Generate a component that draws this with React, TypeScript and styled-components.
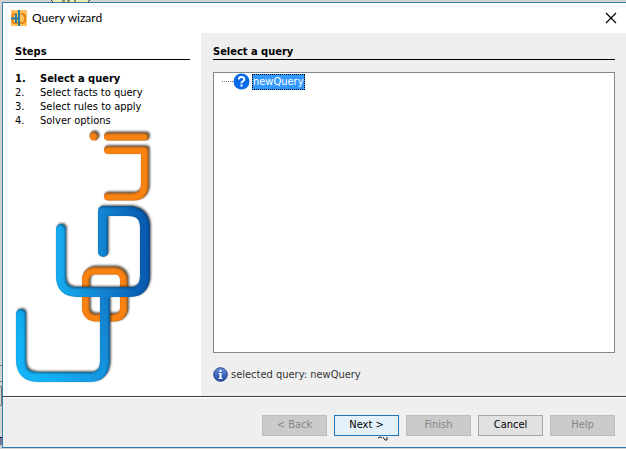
import React from "react";
import styled, { createGlobalStyle, css } from "styled-components";

const GlobalStyle = createGlobalStyle`
  *, *::before, *::after { box-sizing: border-box; }
  body {
    margin: 0;
    overflow: hidden;
    background: #d3d3d3;
    color: #000;
    font: 11px/14px "DejaVu Sans Condensed", "Noto Sans", sans-serif;
  }
`;

const Desktop = styled.div`
  position: relative;
  display: flex;
  min-height: 100vh;
  padding: 2px 0 1px 2px;
  overflow: hidden;
`;

const BackgroundWindow = styled.svg`
  position: absolute;
  top: 0;
  left: 0;
`;

const Dialog = styled.section`
  position: relative;
  flex: 1;
  display: grid;
  grid-template-columns: 198px 1fr;
  grid-template-rows: 30px 1fr 51px;
  border: 1px solid #2f7fae;
  border-right: 0;
  background: #efefef;
`;

const TitleBar = styled.header`
  grid-column: 1 / -1;
  display: flex;
  align-items: center;
  gap: 5px;
  padding: 0 9px 0 8px;
  background: #fff;
`;

const Title = styled.h1`
  flex: 1;
  margin: 0;
  font: 12px/16px Lato, "Open Sans", sans-serif;
`;

const CloseButton = styled.button`
  display: flex;
  padding: 0;
  border: 0;
  background: none;
`;

const pane = css`
  display: flex;
  flex-direction: column;
  padding: 12px 11px 0 12px;
`;

const Sidebar = styled.aside`
  ${pane}
  background: #fff;
`;

const Main = styled.main`
  ${pane}
`;

const Heading = styled.h2`
  margin: 0 0 12px;
  border-bottom: 1px solid #000;
  font-size: 11px;
  line-height: 14px;
  font-weight: bold;
`;

const Steps = styled.ol`
  margin: 0;
  padding: 0;
  list-style: none;
`;

const Step = styled.li<{ $current?: boolean }>`
  display: grid;
  grid-template-columns: 25px 1fr;
  font-weight: ${(p) => (p.$current ? "bold" : "normal")};
`;

const LogoArt = styled.svg`
  display: block;
  flex: none;
`;

const Tree = styled.ul`
  flex: 1;
  margin: 0;
  padding: 0 0 0 8px;
  border: 1px solid #828790;
  background: #fff;
  list-style: none;
`;

const TreeItem = styled.li`
  display: flex;
  align-items: center;
  height: 17px;

  &::before {
    content: "";
    width: 11px;
    border-top: 1px dotted #777;
  }
`;

const NodeLabel = styled.button`
  height: 16px;
  margin-left: 2px;
  padding: 0;
  border: 1px dotted #000;
  background: #3399ff;
  color: #fff;
  font: inherit;
`;

const Status = styled.p`
  display: flex;
  align-items: center;
  gap: 3px;
  height: 43px;
  margin: 0;
  color: #333;
`;

const Footer = styled.footer`
  grid-column: 1 / -1;
  display: flex;
  align-items: center;
  justify-content: flex-end;
  gap: 7px;
  padding: 6px 11px 0 0;
  border-top: 1px solid #404040;
  box-shadow: inset 0 1px #fff;
`;

const WizardButton = styled.button<{ $primary?: boolean }>`
  width: 65px;
  height: 21px;
  padding: 0;
  border: 1px solid ${(p) => (p.$primary ? "#1e74b5" : "#a5a5a5")};
  background: ${(p) => (p.$primary ? "#e3f1fb" : "#e1e1e1")};
  color: #000;
  font: inherit;

  &:disabled {
    border-color: #bcbcbc;
    background: #cbcbcb;
    color: #858585;
  }
`;

const Cursor = styled.svg`
  position: absolute;
  left: 377px;
  top: 436px;
`;

function Logo() {
  return (
    <LogoArt width="152" height="256" viewBox="15 127 152 256" role="img" aria-label="CoGui">
      <defs>
        <linearGradient id="blue" gradientUnits="userSpaceOnUse" x1="16" y1="340" x2="150" y2="255">
          <stop offset="0" stopColor="#12b4f7" />
          <stop offset="0.5" stopColor="#1587d4" />
          <stop offset="1" stopColor="#0b5cb0" />
        </linearGradient>
        <linearGradient id="blueUpper" gradientUnits="userSpaceOnUse" x1="56" y1="0" x2="150" y2="0">
          <stop offset="0" stopColor="#15adf0" />
          <stop offset="0.5" stopColor="#1283d2" />
          <stop offset="1" stopColor="#0756ad" />
        </linearGradient>
        <filter id="bevel" filterUnits="userSpaceOnUse" x="12" y="120" width="150" height="270" colorInterpolationFilters="sRGB">
          <feOffset in="SourceAlpha" dx="-1" dy="1" result="moved" />
          <feGaussianBlur in="moved" stdDeviation="1" result="soft" />
          <feComposite in="SourceAlpha" in2="soft" operator="out" result="edge" />
          <feFlood floodColor="#103050" floodOpacity="0.6" />
          <feComposite in2="edge" operator="in" result="shade" />
          <feMerge result="body">
            <feMergeNode in="SourceGraphic" />
            <feMergeNode in="shade" />
          </feMerge>
          <feDropShadow in="body" dx="1" dy="-1" stdDeviation="1" floodColor="#222" floodOpacity="0.75" />
        </filter>
      </defs>
      <g fill="none" strokeLinecap="round" strokeLinejoin="round">
        <g stroke="#fa8210" strokeWidth="8" filter="url(#bevel)">
          <circle cx="94" cy="135" r="4.5" fill="#fa8210" stroke="none" />
          <path d="M108 135.500H145" />
          <path d="M108 149H145V183Q145 195.500 133 195.500H108" />
          <rect x="86" y="269.500" width="38" height="47" rx="9" />
        </g>
        <g strokeWidth="10" filter="url(#bevel)">
          <path stroke="url(#blue)" d="M21 313V359Q21 376 38 376H90Q105 376 105 359V291" />
          <path stroke="url(#blueUpper)" d="M103 251V210H128Q145 210 145 227V274Q145 291 130 291H77Q61 291 61 275V228" />
        </g>
      </g>
    </LogoArt>
  );
}

const steps = ["Select a query", "Select facts to query", "Select rules to apply", "Solver options"];

export default function App() {
  return (
    <>
      <GlobalStyle />
      <Desktop>
        <BackgroundWindow width="100" height="449" aria-hidden="true">
          <path fill="#eeeeb0" d="M52 0H88V2H52Z" />
          <path stroke="#333" d="M51 0l2 2M62 1h3M67 1h3M74 1h2M90 0l-2 2" />
          <path stroke="#777" fill="none" d="M0 365.500H2M0 381.500H2M0 386.500H1.500V405.500H0" />
          <path stroke="#16164a" d="M0 437.500H2M1 437V445" />
        </BackgroundWindow>
        <Dialog role="dialog" aria-labelledby="dialog-title">
          <TitleBar>
            <svg width="16" height="16" viewBox="0 0 16 16" aria-hidden="true">
              <path fill="#fdc15c" d="M0 0h16v16H0z" />
              <path d="M6 4H3Q1.500 4 1.500 7v4Q1.500 13 4 13h3M10 4h1Q14 4 14 7v3Q14 13 11 13H9" fill="none" stroke="#e98318" strokeWidth="2" />
              <path d="M8 0v16M0 8.500h9M5 4v9" fill="none" stroke="#267ba0" strokeWidth="2" />
            </svg>
            <Title id="dialog-title">Query wizard</Title>
            <CloseButton type="button" aria-label="Close">
              <svg width="12" height="12" viewBox="0 0 12 12">
                <path d="M1 1l10 10M11 1L1 11" stroke="#000" strokeWidth="1.2" />
              </svg>
            </CloseButton>
          </TitleBar>
          <Sidebar>
            <Heading>Steps</Heading>
            <Steps>
              {steps.map((label, i) => (
                <Step key={label} $current={i === 0} aria-current={i === 0 ? "step" : undefined}>
                  <span>{i + 1}.</span>
                  <span>{label}</span>
                </Step>
              ))}
            </Steps>
            <Logo />
          </Sidebar>
          <Main>
            <Heading>Select a query</Heading>
            <Tree>
              <TreeItem>
                <svg width="17" height="17" viewBox="0 0 17 17" aria-hidden="true">
                  <circle cx="8.500" cy="8.500" r="8" fill="#0a6be8" />
                  <path d="M5.800 6.300Q6 4 8.500 4T11.300 6.300Q11.300 7.500 9.500 8.500Q8.500 9.100 8.500 10.300" fill="none" stroke="#fff" strokeWidth="2" />
                  <path d="M7.400 11.500h2.200v2H7.400z" fill="#fff" />
                </svg>
                <NodeLabel type="button">newQuery</NodeLabel>
              </TreeItem>
            </Tree>
            <Status role="status">
              <svg width="15" height="15" viewBox="0 0 15 15" aria-hidden="true">
                <defs>
                  <linearGradient id="info" x2="0" y2="1">
                    <stop stopColor="#6b91da" />
                    <stop offset="1" stopColor="#1c48a6" />
                  </linearGradient>
                </defs>
                <circle cx="7.500" cy="7.500" r="6.800" fill="url(#info)" stroke="#27478f" />
                <path d="M6.500 3h2v2h-2zM5.500 6h3v5h1v1h-4v-1h1V7h-1z" fill="#fff" />
              </svg>
              selected query: newQuery
            </Status>
          </Main>
          <Footer>
            <WizardButton type="button" disabled>&lt; Back</WizardButton>
            <WizardButton type="button" $primary>Next &gt;</WizardButton>
            <WizardButton type="button" disabled>Finish</WizardButton>
            <WizardButton type="button">Cancel</WizardButton>
            <WizardButton type="button" disabled>Help</WizardButton>
          </Footer>
        </Dialog>
        <Cursor width="12" height="6" viewBox="0 0 12 6" aria-hidden="true">
          <path d="M1 2l2-1 2 1M6 1l2 3h2V1" fill="none" stroke="#222" />
        </Cursor>
      </Desktop>
    </>
  );
}
